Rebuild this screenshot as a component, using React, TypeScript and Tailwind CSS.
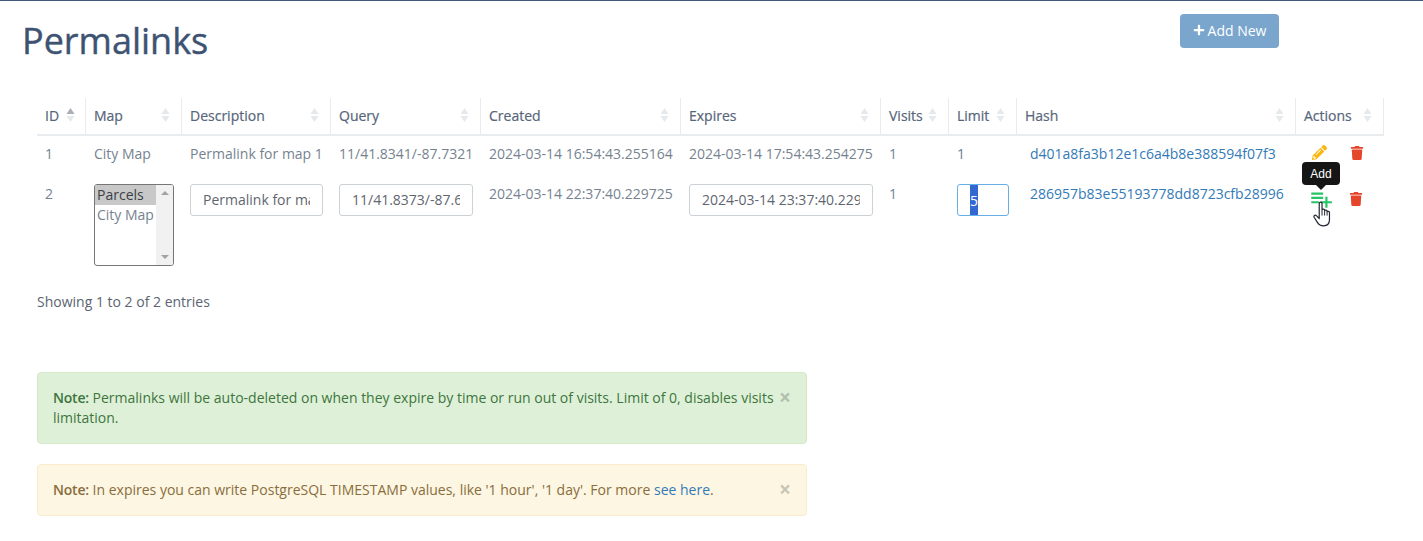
import { FaPencilAlt, FaPlus, FaTrash } from "react-icons/fa";
import { MdPlaylistAdd } from "react-icons/md";

const columns = [
  { name: "ID", width: "w-[48px]", active: true },
  { name: "Map", width: "w-[96px]" },
  { name: "Description", width: "w-[149px]" },
  { name: "Query", width: "w-[150px]" },
  { name: "Created", width: "w-[200px]" },
  { name: "Expires", width: "w-[200px]" },
  { name: "Visits", width: "w-[68px]" },
  { name: "Limit", width: "w-[68px]" },
  { name: "Hash", width: "w-[279px]" },
  { name: "Actions", width: "w-[89px]" },
];

function SortIcon({ active }: { active?: boolean }) {
  return (
    <svg width="9" height="16" viewBox="0 0 9 16" className="shrink-0">
      <path d="M4.5 1 L8.5 7 H0.5 Z" fill={active ? "#a9b0b8" : "#e6e9ec"} />
      <path d="M4.5 15 L8.5 9 H0.5 Z" fill="#e6e9ec" />
    </svg>
  );
}

function HandCursor() {
  return (
    <svg width="20" height="27" viewBox="0 0 18 25" className="absolute left-[5px] top-[15px]">
      <path
        d="M5.5 2.2c0-1.6 2.6-1.6 2.6 0v6c0-1 2.4-1 2.4.2v.8c0-1 2.3-1 2.3.3v.8c0-1 2.2-.9 2.2.4v6.500c0 3.500-2 5.800-5.500 5.800-3 0-4.400-1.200-5.700-3.200l-3-4.800c-.8-1.400 1-2.600 2.100-1.400l2.600 2.600z"
        fill="#fff"
        stroke="#1f2430"
        strokeWidth="1.100"
        strokeLinejoin="round"
      />
      <path d="M8.100 8.500v5M10.500 9.500v4M12.800 10.500v3" stroke="#1f2430" strokeWidth="0.900" fill="none" />
    </svg>
  );
}

function ListBox() {
  return (
    <div className="flex h-[82px] w-[80px] overflow-hidden rounded-[3px] border border-[#767676] bg-white leading-[20px]">
      <div className="w-[61px] whitespace-nowrap">
        <div className="bg-[#c8c8c8] px-[2px] text-[#3a3f47]">Parcels</div>
        <div className="px-[2px]">City Map</div>
      </div>
      <div className="flex w-[17px] flex-col items-center justify-between bg-[#f1f1f1] py-[6px]">
        <span className="h-0 w-0 border-x-[4px] border-b-[4px] border-x-transparent border-b-[#a3a3a3]" />
        <span className="h-0 w-0 border-x-[4px] border-t-[4px] border-x-transparent border-t-[#a3a3a3]" />
      </div>
    </div>
  );
}

function Alert({ tone, children }: { tone: "green" | "yellow"; children: React.ReactNode }) {
  const cls =
    tone === "green"
      ? "bg-[#dff0d8] border-[#d6e9c6] text-[#3c763d]"
      : "bg-[#fcf6e3] border-[#faebcc] text-[#8a6d3b]";
  return (
    <div className={`relative w-[770px] rounded border py-[15px] pl-[15px] pr-[30px] leading-[20px] ${cls}`}>
      {children}
      <span className="absolute right-[15px] top-[14px] text-[21px] leading-[21px] font-bold text-black opacity-20">×</span>
    </div>
  );
}

export default function App() {
  return (
    <div className="min-h-[541px] border-t border-[#3e5a7a] bg-white font-['Open_Sans',sans-serif] text-[14px] text-[#76838f]">
      <div className="flex w-[1279px] items-start justify-between pl-[22px] pt-[13px]">
        <h1 className="mt-[2px] text-[36px] leading-[50px] font-medium text-[#3e5372] [-webkit-text-stroke:0.4px]">Permalinks</h1>
        <button className="flex h-[34px] w-[99px] items-center justify-center gap-[3px] rounded bg-[#7aa6ce] pb-[2px] text-white">
          <FaPlus className="text-[12px]" />
          Add New
        </button>
      </div>

      <div className="pl-[37px] pt-[32px]">
        <table className="w-[1347px] table-fixed border-separate border-spacing-0">
          <thead>
            <tr>
              {columns.map((c, i) => (
                <th
                  key={c.name}
                  className={`${c.width} h-[38px] border-b-2 border-[#e9ecef] pl-2 pr-[11px] pb-[2px] text-left font-medium text-[#56657a] [-webkit-text-stroke:0.2px] ${i > 0 ? "border-l" : ""} ${i === 9 ? "border-r" : ""}`}
                >
                  <div className="flex items-center justify-between">
                    <span className={c.active ? "mr-[7px]" : ""}>{c.name}</span>
                    <span className={c.active ? "mr-auto" : ""}>
                      <SortIcon active={c.active} />
                    </span>
                  </div>
                </th>
              ))}
            </tr>
          </thead>
          <tbody>
            <tr className="h-[40px] align-top">
              <td className="px-2 pt-[7px]">1</td>
              <td className="pl-[9px] pr-2 pt-[7px]">City Map</td>
              <td className="pl-[9px] pr-0 pt-[7px] whitespace-nowrap">Permalink for map 1</td>
              <td className="pl-[9px] pr-0 pt-[7px] whitespace-nowrap">11/41.8341/-87.7321</td>
              <td className="pl-[9px] pr-0 pt-[7px] whitespace-nowrap">2024-03-14 16:54:43.255164</td>
              <td className="pl-[9px] pr-0 pt-[7px] whitespace-nowrap">2024-03-14 17:54:43.254275</td>
              <td className="pl-[9px] pr-0 pt-[7px]">1</td>
              <td className="pl-[9px] pr-0 pt-[7px] text-[#6a8299]">1</td>
              <td className="pl-[14px] pt-[7px] whitespace-nowrap text-[#337ab7]">d401a8fa3b12e1c6a4b8e388594f07f3</td>
              <td className="pl-[17px] pt-[9px]">
                <div className="flex items-center">
                  <FaPencilAlt className="text-[15px] text-[#fbb70f]" />
                  <FaTrash className="ml-[23px] text-[14px] text-[#e5452a]" />
                </div>
              </td>
            </tr>
            <tr className="h-[98px] align-top">
              <td className="px-2 pt-[7px]">2</td>
              <td className="pl-[9px] pr-0 pt-[8px]">
                <ListBox />
              </td>
              <td className="pl-[9px] pr-0 pt-[8px]">
                <input
                  readOnly
                  value="Permalink for map 2"
                  className="h-[32px] w-[133px] rounded-[3px] border border-[#ccd1d6] px-3 pb-[2px] text-[#5f6670]"
                />
              </td>
              <td className="pl-[9px] pr-0 pt-[8px]">
                <input
                  readOnly
                  value="11/41.8373/-87.6298"
                  className="h-[32px] w-[134px] rounded-[3px] border border-[#ccd1d6] px-3 pb-[2px] text-[#5f6670]"
                />
              </td>
              <td className="pl-[9px] pr-0 pt-[7px] whitespace-nowrap">2024-03-14 22:37:40.229725</td>
              <td className="pl-[9px] pr-0 pt-[8px]">
                <input
                  readOnly
                  value="2024-03-14 23:37:40.229725"
                  className="h-[32px] w-[184px] rounded-[3px] border border-[#ccd1d6] px-3 pb-[2px] text-[#5f6670]"
                />
              </td>
              <td className="pl-[9px] pr-0 pt-[7px]">1</td>
              <td className="pl-[9px] pr-0 pt-[8px]">
                <div className="flex h-[32px] w-[52px] items-stretch rounded-[3px] border border-[#66afe9] pl-[12px]">
                  <span className="flex w-[8px] items-center justify-center bg-[#3367d1] text-white">5</span>
                </div>
              </td>
              <td className="pl-[14px] pt-[7px] whitespace-nowrap text-[#337ab7]">286957b83e55193778dd8723cfb28996</td>
              <td className="pl-[13px] pt-[10px]">
                <div className="relative flex items-center">
                  <MdPlaylistAdd className="text-[26px] text-[#25c465]" />
                  <FaTrash className="ml-[15px] text-[14px] text-[#e5452a]" />
                  <div className="absolute left-[-6px] top-[-24px] flex h-[23px] w-[38px] items-center justify-center rounded-[4px] bg-[#151515] font-['Liberation_Sans',sans-serif] text-[12px] text-white">
                    Add
                    <span className="absolute top-full left-[19px] h-0 w-0 -translate-x-1/2 border-x-[5px] border-t-[5px] border-x-transparent border-t-[#151515]" />
                  </div>
                  <HandCursor />
                </div>
              </td>
            </tr>
          </tbody>
        </table>

        <p className="pt-[18px] leading-[20px] text-[#5b6470]">Showing 1 to 2 of 2 entries</p>

        <div className="flex flex-col gap-[20px] pt-[60px]">
          <Alert tone="green">
            <strong className="font-semibold tracking-[-0.2px]">Note:</strong> Permalinks will be auto-deleted on when they expire by time or run out of visits. Limit of 0, disables visits limitation.
          </Alert>
          <Alert tone="yellow">
            <strong className="font-semibold tracking-[-0.2px]">Note:</strong> In expires you can write PostgreSQL TIMESTAMP values, like '1 hour', '1 day'. For more{" "}
            <a className="text-[#337ab7]">see here</a>.
          </Alert>
        </div>
      </div>
    </div>
  );
}
